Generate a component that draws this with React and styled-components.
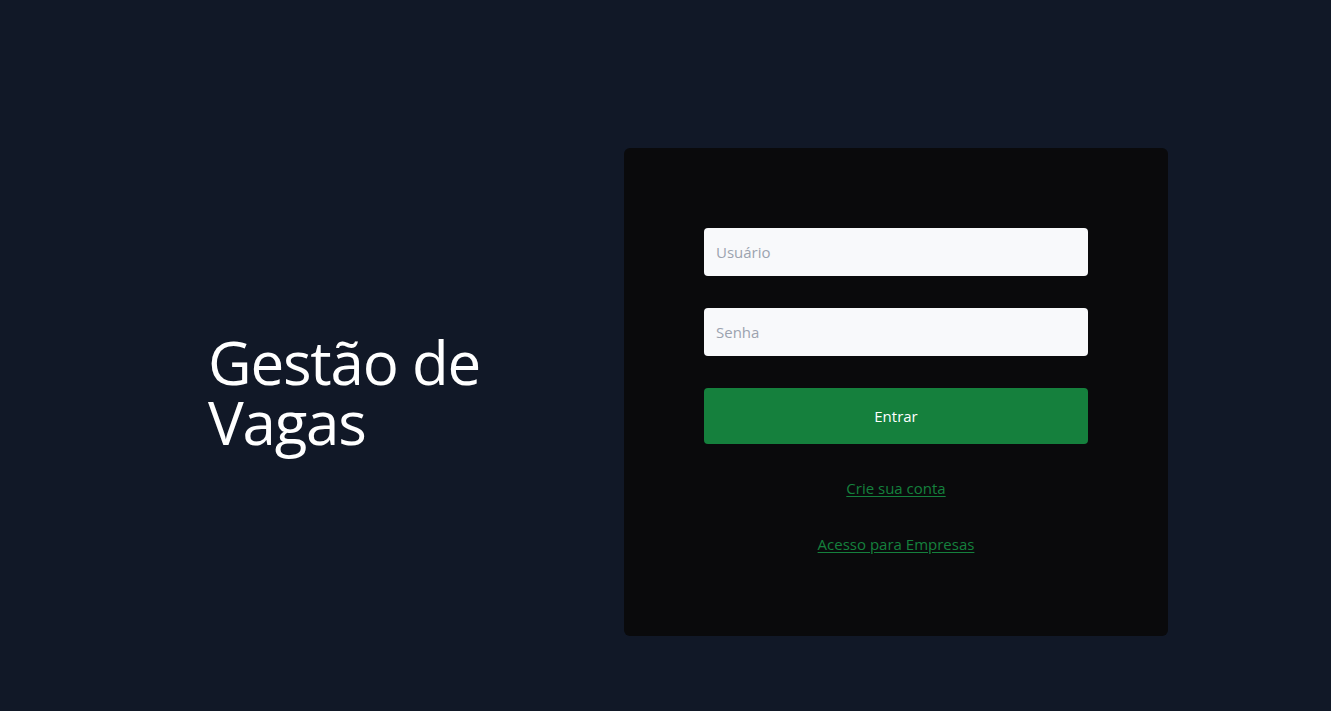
import React from "react";
import styled, { createGlobalStyle } from "styled-components";

const Global = createGlobalStyle`
  html, body { margin: 0; padding: 0; background: #111827; }
  body { font-family: "Open Sans", "Noto Sans", sans-serif; -webkit-font-smoothing: antialiased; }
  * { box-sizing: border-box; }
`;

const Page = styled.main`
  min-height: 711px;
  padding: 148px 0 0 208px;
`;

const Row = styled.div`
  display: flex;
  align-items: center;
`;

const Title = styled.h1`
  width: 416px;
  margin: 0;
  font-size: 60px;
  line-height: 60px;
  font-weight: 400;
  color: #ffffff;
  letter-spacing: -1.2px;
`;

const Card = styled.form`
  width: 544px;
  background: #0a0a0c;
  border-radius: 6px;
  padding: 80px;
  display: flex;
  flex-direction: column;
  gap: 32px;
`;

const Input = styled.input`
  height: 48px;
  width: 100%;
  border: none;
  border-radius: 4px;
  background: #f8f9fb;
  padding: 0 12px;
  font-family: inherit;
  font-size: 15px;
  color: #111827;
  outline: none;
  &::placeholder { color: #9ca3af; }
`;

const Button = styled.button`
  height: 56px;
  border: none;
  border-radius: 4px;
  background: #15803d;
  color: #ffffff;
  font-family: inherit;
  font-size: 15px;
  cursor: pointer;
`;

const LinkText = styled.a`
  display: block;
  text-align: center;
  line-height: 24px;
  font-size: 15px;
  color: #15803d;
  text-decoration: underline;
  text-underline-offset: 2px;
`;

export default function App() {
  return (
    <>
      <Global />
      <Page>
        <Row>
          <Title>Gestão de Vagas</Title>
          <Card onSubmit={(e) => e.preventDefault()}>
            <Input placeholder="Usuário" />
            <Input type="password" placeholder="Senha" />
            <Button type="submit">Entrar</Button>
            <LinkText href="#">Crie sua conta</LinkText>
            <LinkText href="#">Acesso para Empresas</LinkText>
          </Card>
        </Row>
      </Page>
    </>
  );
}
